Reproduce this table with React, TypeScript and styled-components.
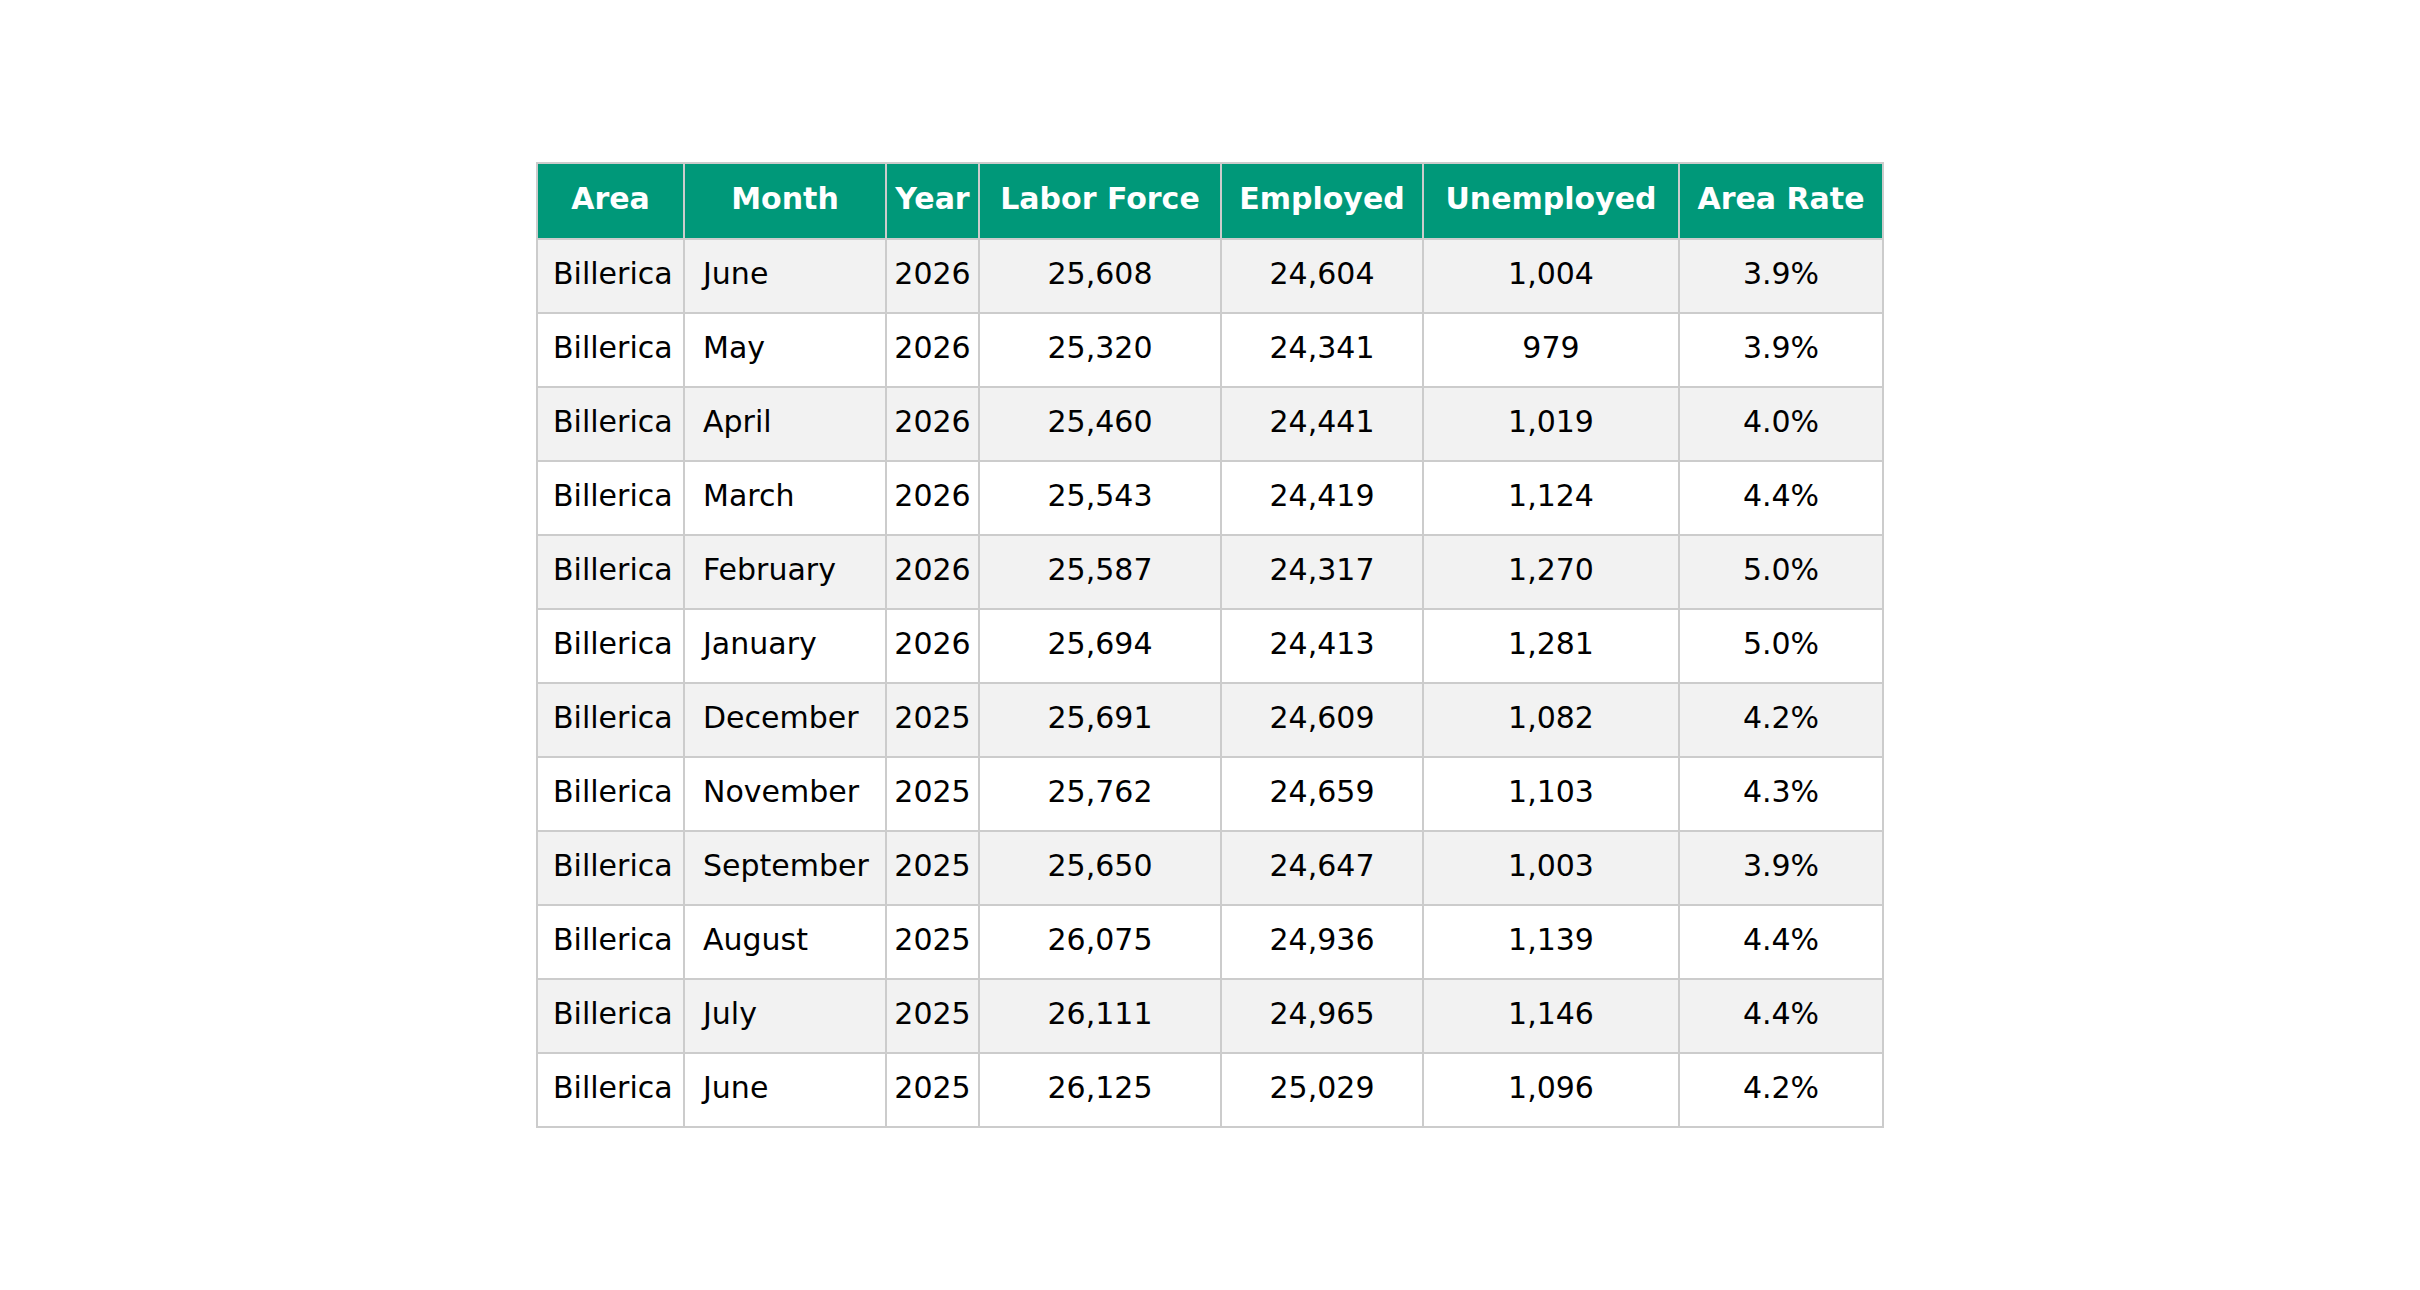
import React from "react";
import styled, { createGlobalStyle } from "styled-components";

const Global = createGlobalStyle`
  html, body { margin: 0; padding: 0; background: #ffffff; }
  body { font-family: "DejaVu Sans", "Liberation Sans", sans-serif; }
`;

const Page = styled.div`
  display: flex;
  justify-content: center;
  align-items: flex-start;
  padding-top: 162px;
  width: 2420px;
  height: 1290px;
  box-sizing: border-box;
`;

const Table = styled.table`
  border-collapse: collapse;
  table-layout: fixed;
  width: 1346px;
  font-family: "DejaVu Sans", sans-serif;
  font-size: 30px;
  color: #000;
  border: 2px solid #cccccc;
`;

const HeadRow = styled.tr`
  height: 76px;
  background: #009879;
`;

const Th = styled.th`
  color: #ffffff;
  font-weight: bold;
  text-align: center;
  border: 2px solid #cccccc;
  padding: 0 0 5px 0;
  white-space: nowrap;
`;

const Row = styled.tr<{ $shade: boolean }>`
  height: 74px;
  background: ${(p) => (p.$shade ? "#f2f2f2" : "#ffffff")};
`;

const Td = styled.td<{ $align?: "left" | "center"; $pad?: number }>`
  border: 2px solid #cccccc;
  text-align: ${(p) => p.$align ?? "center"};
  padding: 0 0 5px ${(p) => p.$pad ?? 0}px;
  white-space: nowrap;
  vertical-align: middle;
`;

const cols = [147, 202, 93, 242, 202, 256, 204];
const headers = ["Area", "Month", "Year", "Labor Force", "Employed", "Unemployed", "Area Rate"];

const rows: string[][] = [
  ["June", "2026", "25,608", "24,604", "1,004", "3.9%"],
  ["May", "2026", "25,320", "24,341", "979", "3.9%"],
  ["April", "2026", "25,460", "24,441", "1,019", "4.0%"],
  ["March", "2026", "25,543", "24,419", "1,124", "4.4%"],
  ["February", "2026", "25,587", "24,317", "1,270", "5.0%"],
  ["January", "2026", "25,694", "24,413", "1,281", "5.0%"],
  ["December", "2025", "25,691", "24,609", "1,082", "4.2%"],
  ["November", "2025", "25,762", "24,659", "1,103", "4.3%"],
  ["September", "2025", "25,650", "24,647", "1,003", "3.9%"],
  ["August", "2025", "26,075", "24,936", "1,139", "4.4%"],
  ["July", "2025", "26,111", "24,965", "1,146", "4.4%"],
  ["June", "2025", "26,125", "25,029", "1,096", "4.2%"],
];

export default function App() {
  return (
    <>
      <Global />
      <Page>
        <Table>
          <colgroup>
            {cols.map((w, i) => (
              <col key={i} style={{ width: w }} />
            ))}
          </colgroup>
          <thead>
            <HeadRow>
              {headers.map((h) => (
                <Th key={h}>{h}</Th>
              ))}
            </HeadRow>
          </thead>
          <tbody>
            {rows.map((r, i) => (
              <Row key={i} $shade={i % 2 === 0}>
                <Td $align="left" $pad={15}>Billerica</Td>
                <Td $align="left" $pad={18}>{r[0]}</Td>
                <Td>{r[1]}</Td>
                <Td>{r[2]}</Td>
                <Td>{r[3]}</Td>
                <Td>{r[4]}</Td>
                <Td>{r[5]}</Td>
              </Row>
            ))}
          </tbody>
        </Table>
      </Page>
    </>
  );
}
